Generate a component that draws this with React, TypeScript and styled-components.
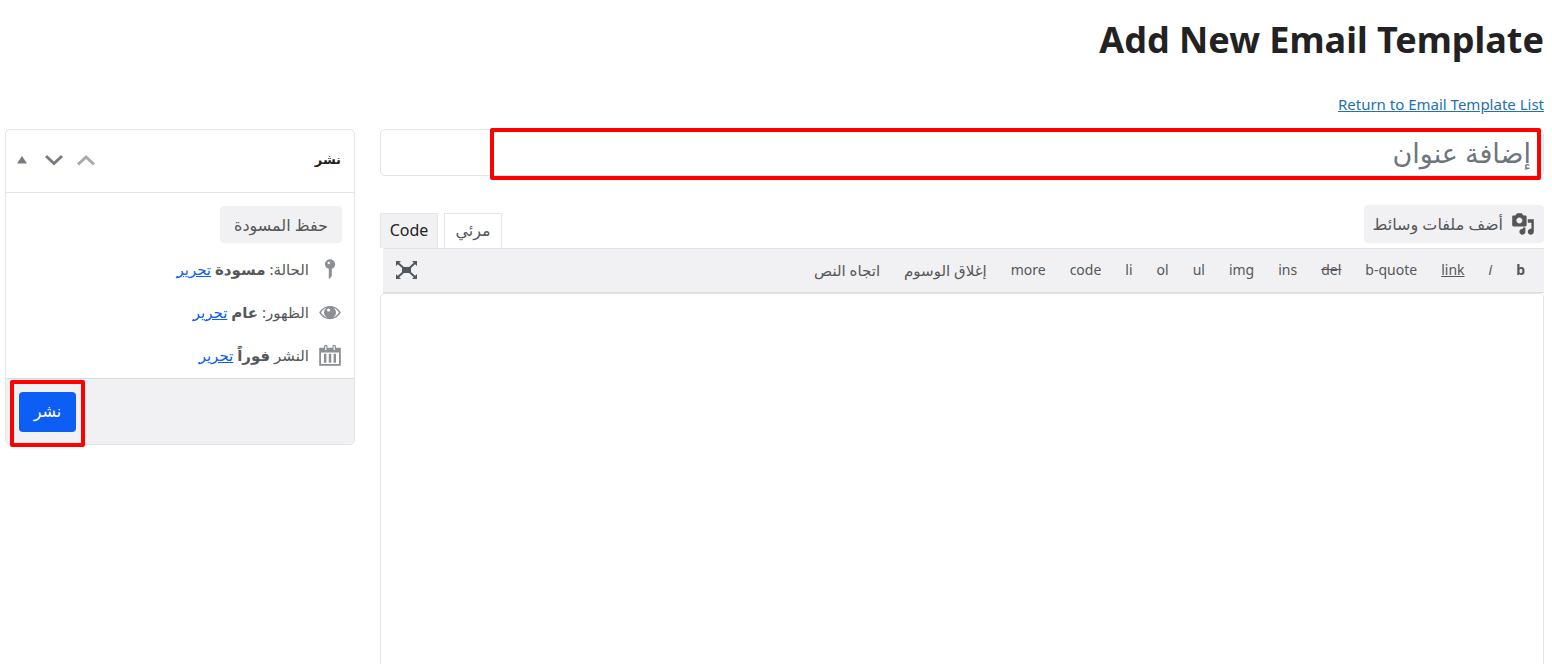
import React from "react";
import styled, { createGlobalStyle } from "styled-components";

const GlobalStyle = createGlobalStyle`
  * { box-sizing: border-box; }
  body {
    margin: 0;
    background: #fff;
    color: #555759;
    font-family: "Noto Sans", "DejaVu Sans", sans-serif;
    font-size: 14px;
    line-height: 20px;
  }
  button, input, textarea { font: inherit; color: inherit; }
  button { cursor: pointer; }
`;

const Page = styled.div`
  min-height: 100vh;
  display: flex;
  flex-direction: column;
  padding: 16px 8px 0 5px;
`;

const PageTitle = styled.h1`
  margin: 0;
  color: #222;
  font-size: 36px;
  line-height: 48px;
  font-weight: 700;
`;

const ReturnLink = styled.a`
  align-self: flex-start;
  margin: 30px 0 15px;
  color: #2271b1;
  font-size: 15px;
`;

const Columns = styled.div`
  flex: 1;
  display: grid;
  grid-template-columns: minmax(0, 1fr) 350px;
  gap: 25px;
`;

const Main = styled.main`
  display: flex;
  flex-direction: column;
`;

const TitleField = styled.div`
  position: relative;
  display: flex;
`;

const TitleInput = styled.input`
  width: 100%;
  height: 47px;
  padding: 0 12px;
  border: 1px solid #e5e5e7;
  border-radius: 5px;
  font-size: 27px;
  line-height: 32px;
  &::placeholder { color: #6c757d; opacity: 1; }
`;

const Highlight = styled.div<{ $inset: string }>`
  position: absolute;
  inset: ${(p) => p.$inset};
  border: 4px solid #f00;
  border-radius: 2px;
  pointer-events: none;
`;

const EditorTools = styled.div`
  display: flex;
  justify-content: space-between;
  align-items: flex-end;
  margin-top: 29px;
`;

const SoftButton = styled.button`
  display: inline-flex;
  align-items: center;
  gap: 8px;
  height: 37px;
  padding: 0 14px;
  border: 0;
  border-radius: 4px;
  background: #f1f1f4;
  font-size: 16px;
`;

const MediaButton = styled(SoftButton)`
  height: 38px;
  padding: 0 9px;
  margin-bottom: 5px;
`;

const Tabs = styled.div`
  display: flex;
  gap: 6px;
`;

const Tab = styled.button<{ $active?: boolean }>`
  width: 58px;
  height: 35px;
  padding: 0 0 2px;
  border: 1px solid #e5e5e7;
  border-bottom: 0;
  background: ${(p) => (p.$active ? "#f1f1f4" : "#fff")};
  color: ${(p) => (p.$active ? "#222" : "#555759")};
  font-size: 16px;
`;

const Toolbar = styled.div`
  display: flex;
  align-items: center;
  height: 45px;
  margin-left: 3px;
  padding: 0 7px 2px 12px;
  border-top: 1px solid #e5e5e7;
  border-bottom: 1px solid #dcdcde;
  background: #f1f1f4;
`;

const Tag = styled.button<{ $kind?: string }>`
  height: 30px;
  padding: 0 12px;
  border: 0;
  background: none;
  font-size: ${(p) => (p.$kind === "arabic" ? "15px" : "14px")};
  font-weight: ${(p) => (p.$kind === "bold" ? 700 : 400)};
  font-style: ${(p) => (p.$kind === "italic" ? "italic" : "normal")};
  text-decoration: ${(p) => (p.$kind === "under" ? "underline" : p.$kind === "strike" ? "line-through" : "none")};
`;

const IconButton = styled.button`
  display: inline-flex;
  padding: 0;
  border: 0;
  background: none;
`;

const FullscreenButton = styled(IconButton)`
  margin-right: auto;
`;

const EditorArea = styled.textarea`
  flex: 1;
  min-height: 370px;
  width: 100%;
  padding: 12px;
  border: 1px solid #e5e5e7;
  border-bottom: 0;
  border-radius: 5px 5px 0 0;
  resize: none;
  display: block;
`;

const Panel = styled.aside`
  align-self: start;
  border: 1px solid #e5e5e7;
  border-radius: 5px;
`;

const PanelHead = styled.header`
  display: flex;
  justify-content: space-between;
  align-items: center;
  height: 63px;
  padding: 0 13px 2px 7px;
  border-bottom: 1px solid #e5e5e7;
`;

const PanelTitle = styled.h2`
  margin: 0;
  color: #222;
  font-family: "Liberation Sans", "DejaVu Sans", sans-serif;
  font-size: 13px;
  line-height: 20px;
`;

const PanelActions = styled.div`
  display: flex;
  align-items: center;
  gap: 14px;
`;

const PanelBody = styled.div`
  padding: 13px 12px 2px;
`;

const StatusRow = styled.div`
  display: flex;
  align-items: center;
  gap: 9px;
  height: 43px;
  font-size: 15px;
  a { color: #0d5ef4; }
`;

const StatusList = styled.div`
  margin-top: 4px;
`;

const PanelFoot = styled.footer`
  display: flex;
  justify-content: flex-end;
  padding: 13px 13px 12px;
  border-top: 1px solid #dcdcde;
  border-radius: 0 0 4px 4px;
  background: #f1f1f4;
`;

const PublishWrap = styled.div`
  position: relative;
`;

const PublishButton = styled.button`
  display: block;
  width: 57px;
  height: 40px;
  padding: 0 0 2px;
  border: 0;
  border-radius: 4px;
  background: #0d5ef4;
  color: #fff;
  font-size: 16px;
`;

const paths = {
  pin: "M14.300 6c0 1.860-1.280 3.410-2.800 3.860V15.500c0 1.500-2.500 3-2.500 3V9.860C7.280 9.410 5.700 7.860 5.700 6c0-2.210 1.990-4.200 4.300-4.200s4.300 1.990 4.300 4.200zM8 5c0 .55.45 1 1 1s1-.45 1-1-.45-1-1-1-1 .45-1 1z",
  eye: "M1 10.500C3 7 6.200 5 10 5s7 2 9 5.500C17 14 13.800 16 10 16s-7-2-9-5.500zM2.500 10.500C3.800 12.600 5.500 14 7.500 14.500 5.900 13.600 5 12.200 5 10.500c0-1.600.7-3 1.900-4C5 7.300 3.600 8.700 2.500 10.500zM17.500 10.500c-1.100-1.800-2.500-3.200-4.400-4 1.200 1 1.900 2.400 1.900 4 0 1.700-.9 3.100-2.500 4 2-.5 3.700-1.900 5-4zM7.500 8.300a1.300 1.300 0 1 0 2.600 0 1.300 1.300 0 1 0-2.600 0z",
  calendar:
    "M15 4h4v15H1V4h4V3c0-.83.67-1.500 1.500-1.500S8 2.170 8 3v1h4V3c0-.83.67-1.500 1.500-1.500S15 2.170 15 3v1zM6 3v2.500c0 .28.22.5.5.5s.5-.22.5-.5V3c0-.28-.22-.5-.5-.5S6 2.720 6 3zm7 0v2.500c0 .28.22.5.5.5s.5-.22.5-.5V3c0-.28-.22-.5-.5-.5s-.5.22-.5.5zM17.500 17.500V8h-15v9.500h15zM7 9v7.500H5V9h2zm4 0v7.500H9V9h2zm4 0v7.500h-2V9h2z",
  media:
    "M13 11V4c0-.55-.45-1-1-1h-1.670L9 1H5L3.670 3H2c-.55 0-1 .45-1 1v7c0 .55.45 1 1 1h10c.55 0 1-.45 1-1zM7 4.500c1.380 0 2.500 1.120 2.500 2.500S8.380 9.500 7 9.500 4.500 8.380 4.500 7 5.620 4.500 7 4.500zM14 6h5v10.500c0 1.380-1.120 2.500-2.500 2.500S14 17.880 14 16.500s1.120-2.500 2.500-2.500c.17 0 .34.02.5.05V9h-3V6zm-4 8.050V13h2v3.500c0 1.380-1.120 2.500-2.500 2.500S7 17.880 7 16.500 8.120 14 9.500 14c.17 0 .34.02.5.05z",
};

function Icon({ name, color = "#8c8f94" }: { name: keyof typeof paths; color?: string }) {
  return (
    <svg width="24" height="24" viewBox="0 0 20 20" fill={color} fillRule="evenodd" aria-hidden="true">
      <path d={paths[name]} />
    </svg>
  );
}

const tags: [string, string?][] = [
  ["b", "bold"], ["i", "italic"], ["link", "under"], ["b-quote"], ["del", "strike"], ["ins"], ["img"],
  ["ul"], ["ol"], ["li"], ["code"], ["more"], ["إغلاق الوسوم", "arabic"], ["اتجاه النص", "arabic"],
];

const rows: { icon: keyof typeof paths; label: string; value: string }[] = [
  { icon: "pin", label: "الحالة:", value: "مسودة" },
  { icon: "eye", label: "الظهور:", value: "عام" },
  { icon: "calendar", label: "النشر", value: "فوراً" },
];

export default function App() {
  return (
    <Page dir="rtl" lang="ar">
      <GlobalStyle />
      <PageTitle>Add New Email Template</PageTitle>
      <ReturnLink href="#list">Return to Email Template List</ReturnLink>
      <Columns>
        <Main>
          <TitleField>
            <TitleInput aria-label="إضافة عنوان" placeholder="إضافة عنوان" />
            <Highlight $inset="-1px 3px -4px 110px" />
          </TitleField>
          <EditorTools>
            <MediaButton type="button">
              <Icon name="media" color="#555" />
              أضف ملفات وسائط
            </MediaButton>
            <Tabs>
              <Tab type="button">مرئي</Tab>
              <Tab type="button" $active>Code</Tab>
            </Tabs>
          </EditorTools>
          <Toolbar role="toolbar">
            {tags.map(([label, kind]) => (
              <Tag key={label} type="button" $kind={kind}>{label}</Tag>
            ))}
            <FullscreenButton type="button" aria-label="ملء الشاشة">
              <svg width="23" height="24" viewBox="0 0 23 24" fill="#50575e" aria-hidden="true">
                <path d="M7 9h9v6H7z" />
                <path d="M1 3h5L1 8zM22 3h-5l5 5zM1 21h5l-5-5zM22 21h-5l5-5z" />
                <path d="M3 5l5 4.500M20 5l-5 4.500M3 19l5-4.500M20 19l-5-4.500" fill="none" stroke="#50575e" strokeWidth="2" />
              </svg>
            </FullscreenButton>
          </Toolbar>
          <EditorArea aria-label="محتوى القالب" dir="rtl" />
        </Main>
        <Panel>
          <PanelHead>
            <PanelTitle>نشر</PanelTitle>
            <PanelActions>
              <IconButton type="button" aria-label="نقل لأعلى">
                <svg width="18" height="18" viewBox="0 0 18 18" fill="none" stroke="#a7aaad" strokeWidth="3" aria-hidden="true"><path d="M1 13.500 9 6l8 7.500" /></svg>
              </IconButton>
              <IconButton type="button" aria-label="نقل لأسفل">
                <svg width="18" height="18" viewBox="0 0 18 18" fill="none" stroke="#787c82" strokeWidth="3" aria-hidden="true"><path d="M1 5 9 12.500 17 5" /></svg>
              </IconButton>
              <IconButton type="button" aria-label="طي اللوحة">
                <svg width="18" height="18" viewBox="0 0 18 18" fill="#787c82" aria-hidden="true"><path d="M4 12.500h10L9 5z" /></svg>
              </IconButton>
            </PanelActions>
          </PanelHead>
          <PanelBody>
            <SoftButton type="button">حفظ المسودة</SoftButton>
            <StatusList>
              {rows.map((row) => (
                <StatusRow key={row.icon}>
                  <Icon name={row.icon} />
                  <span>{row.label} <strong>{row.value}</strong> <a href={`#${row.icon}`}>تحرير</a></span>
                </StatusRow>
              ))}
            </StatusList>
          </PanelBody>
          <PanelFoot>
            <PublishWrap>
              <PublishButton type="button">نشر</PublishButton>
              <Highlight $inset="-12px -9px -15px -9px" />
            </PublishWrap>
          </PanelFoot>
        </Panel>
      </Columns>
    </Page>
  );
}
